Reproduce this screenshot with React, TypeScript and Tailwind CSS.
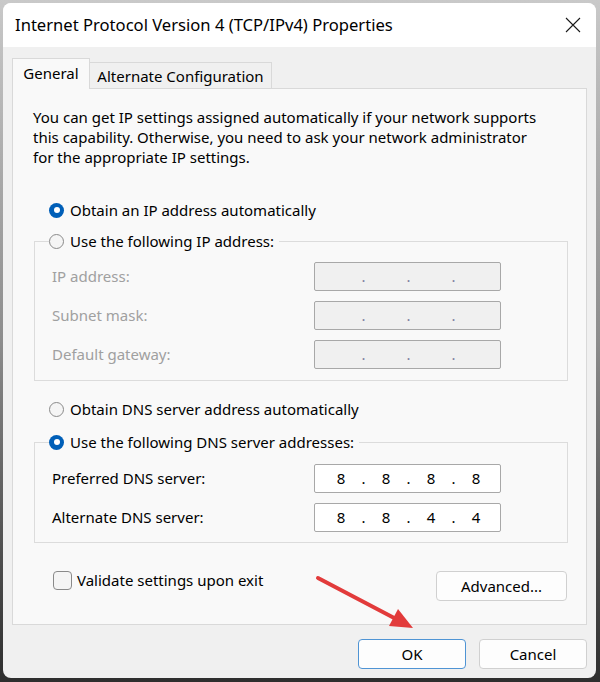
import React from "react";

const F = { fontFamily: '"Noto Sans", "Open Sans", sans-serif' };

function Radio({ checked }: { checked?: boolean }) {
  return checked ? (
    <span className="flex h-[15px] w-[15px] shrink-0 items-center justify-center rounded-full bg-[#005fb8]">
      <span className="h-[6px] w-[6px] rounded-full bg-white" />
    </span>
  ) : (
    <span className="h-[15px] w-[15px] shrink-0 rounded-full border border-[#8a8a8a] bg-[#f5f5f5]" />
  );
}

function IPField({ parts, disabled }: { parts: string[]; disabled?: boolean }) {
  return (
    <div
      className={
        "flex h-[29px] w-[187px] items-center rounded-[2px] border pl-[8px] " +
        (disabled ? "border-[#a8a8a8] bg-[#f0f0f0] text-[#8080a0]" : "border-[#a8a8a8] bg-white text-black")
      }
    >
      {parts.map((p, i) => (
        <React.Fragment key={i}>
          <span className="w-[36px] text-center">{p}</span>
          {i < 3 && <span className="w-[9px] text-center">.</span>}
        </React.Fragment>
      ))}
    </div>
  );
}

export default function App() {
  return (
    <div
      className="h-[682px] w-[600px] bg-gradient-to-b from-[#c9c9c9] via-[#8c8c8c] to-[#2e2e2e] pb-[4px] pl-[3px] pr-[4px] pt-[3px] text-[15px] text-black"
      style={F}
    >
      <div className="relative flex h-full flex-col overflow-hidden rounded-[8px] bg-[#f0f0f0]">
        {/* title bar */}
        <div className="flex h-[44px] shrink-0 items-center justify-between bg-white pl-[12px] pr-[14px]">
          <span className="text-[16.6px]">Internet Protocol Version 4 (TCP/IPv4) Properties</span>
          <svg width="16" height="16" viewBox="0 0 16 16" className="mr-[1px]">
            <path d="M1 1 L15 15 M15 1 L1 15" stroke="#1a1a1a" strokeWidth="1.1" />
          </svg>
        </div>

        <div className="flex flex-col pl-[9px] pt-[11px]">
          {/* tabs */}
          <div className="flex h-[30px] items-end">
            <div className="relative z-10 -mb-[1px] flex h-[31px] w-[78px] items-start justify-center border border-b-0 border-[#d9d9d9] bg-[#f9f9f9] pt-[3px]">
              General
            </div>
            <div className="flex h-[26px] w-[182px] items-center justify-center border border-b-0 border-l-0 border-[#d9d9d9] bg-[#f0f0f0] pt-[1px]">
              Alternate Configuration
            </div>
          </div>

          {/* panel */}
          <div className="flex h-[537px] w-[575px] flex-col border border-[#d9d9d9] bg-[#f9f9f9] pl-[21px] pr-[18px] pt-[18px]">
            <p className="-ml-[1px] leading-[20px]">
              You can get IP settings assigned automatically if your network supports
              <br />
              this capability. Otherwise, you need to ask your network administrator
              <br />
              for the appropriate IP settings.
            </p>

            <div className="ml-[15px] mt-[33px] flex h-[20px] items-center gap-[6px]">
              <Radio checked />
              <span>Obtain an IP address automatically</span>
            </div>

            <fieldset className="mt-[11px] border border-[#dcdcdc] pb-[11px]">
              <legend className="ml-[14px] flex h-[20px] items-center gap-[6px] pr-[5px]">
                <Radio />
                <span>Use the following IP address:</span>
              </legend>
              <div className="mt-[11px] grid grid-cols-[262px_187px] gap-y-[10px] pl-[17px] text-[#a0a0a0]">
                <span className="flex items-center">IP address:</span>
                <IPField parts={["", "", "", ""]} disabled />
                <span className="flex items-center">Subnet mask:</span>
                <IPField parts={["", "", "", ""]} disabled />
                <span className="flex items-center">Default gateway:</span>
                <IPField parts={["", "", "", ""]} disabled />
              </div>
            </fieldset>

            <div className="ml-[15px] mt-[18px] flex h-[20px] items-center gap-[6px]">
              <Radio />
              <span>Obtain DNS server address automatically</span>
            </div>

            <fieldset className="mt-[13px] border border-[#dcdcdc] pb-[10px]">
              <legend className="ml-[14px] flex h-[20px] items-center gap-[6px] pr-[5px]">
                <Radio checked />
                <span>Use the following DNS server addresses:</span>
              </legend>
              <div className="mt-[12px] grid grid-cols-[262px_187px] gap-y-[10px] pl-[17px]">
                <span className="flex items-center">Preferred DNS server:</span>
                <IPField parts={["8", "8", "8", "8"]} />
                <span className="flex items-center">Alternate DNS server:</span>
                <IPField parts={["8", "8", "4", "4"]} />
              </div>
            </fieldset>

            <div className="mt-[26px] flex items-start justify-between pl-[19px] pr-[1px]">
              <div className="flex items-center gap-[5px]">
                <span className="h-[19px] w-[19px] rounded-[4px] border border-[#8a8a8a] bg-[#f5f5f5]" />
                <span>Validate settings upon exit</span>
              </div>
              <button className="mt-[2px] h-[30px] w-[131px] rounded-[4px] border border-[#d0d0d0] bg-[#fdfdfd]">
                Advanced...
              </button>
            </div>
          </div>

          {/* bottom buttons */}
          <div className="mt-[14px] flex w-[575px] justify-end gap-[13px]">
            <button className="h-[30px] w-[108px] rounded-[4px] border border-[#4f94d4] bg-[#fdfdfd]">OK</button>
            <button className="h-[30px] w-[108px] rounded-[4px] border border-[#d0d0d0] bg-[#fdfdfd]">Cancel</button>
          </div>
        </div>

        {/* red annotation arrow */}
        <svg
          className="pointer-events-none absolute left-[-3px] top-[-3px]"
          width="600"
          height="682"
          viewBox="0 0 600 682"
        >
          <line x1="318" y1="578" x2="398" y2="620" stroke="#e23b3b" strokeWidth="4" strokeLinecap="round" />
          <polygon points="413,628 389,626 398,609" fill="#e23b3b" />
        </svg>
      </div>
    </div>
  );
}
